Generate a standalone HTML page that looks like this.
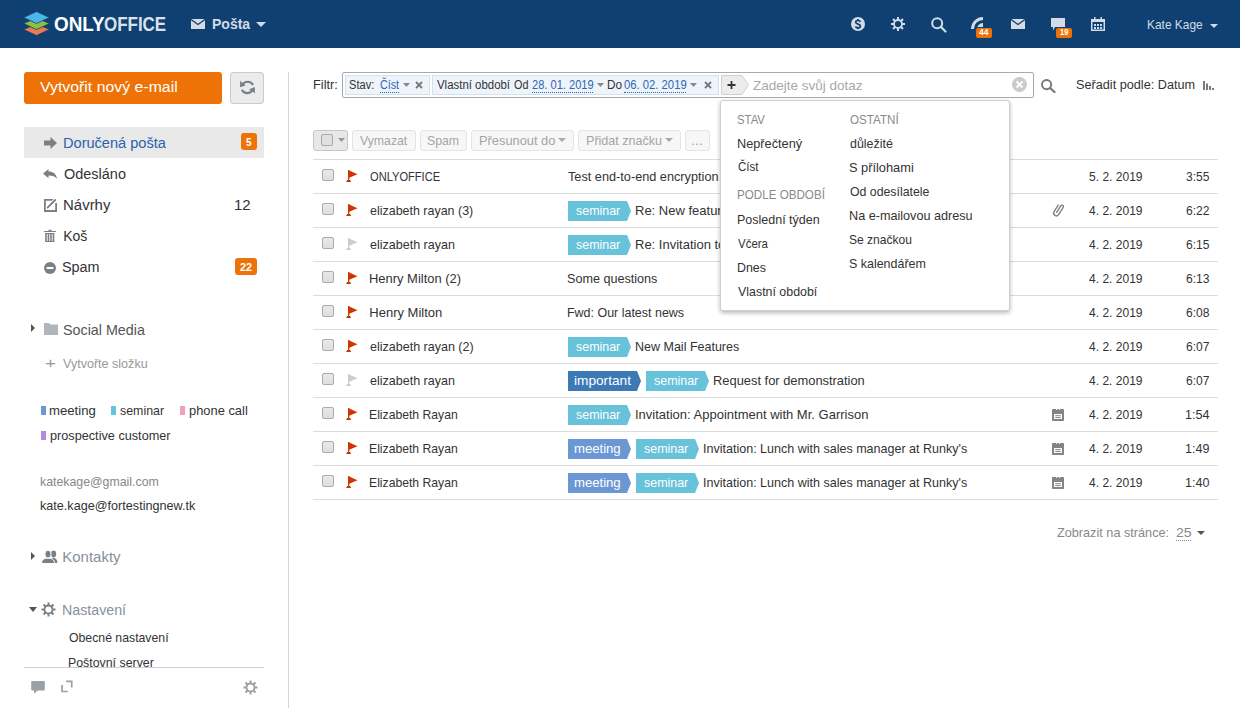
<!DOCTYPE html><html><head><meta charset="utf-8"><style>
html,body{margin:0;padding:0;width:1240px;height:708px;overflow:hidden;background:#fff;position:relative}
.t{position:absolute;white-space:nowrap;line-height:1;font-family:"Liberation Sans", sans-serif;transform-origin:0 0}
svg{display:block}
</style></head><body>
<div style="position:absolute;left:0px;top:0px;width:1240px;height:48px;background:#0f4071"></div>
<svg style="position:absolute;left:23px;top:11px" width="27" height="25" viewBox="0 0 27 25">
<path d="M13.5 13 L26.5 18.5 L13.5 24.5 L0.5 18.5 Z" fill="#ea7a53" stroke="#0f4071" stroke-width="0.8" stroke-linejoin="round"/>
<path d="M13.5 7 L26.5 12.5 L13.5 18.5 L0.5 12.5 Z" fill="#8cc13f" stroke="#0f4071" stroke-width="0.8" stroke-linejoin="round"/>
<path d="M13.5 0.5 L26.5 6.5 L13.5 12.5 L0.5 6.5 Z" fill="#4cb6ea" stroke="#0f4071" stroke-width="0.8" stroke-linejoin="round"/>
</svg>
<svg style="position:absolute;left:191px;top:19px" width="14" height="10" viewBox="0 0 14 10"><rect x="0" y="0" width="14" height="10" fill="#d2dbe6"/><path d="M0 0.5 L7 5.5 L14 0.5" stroke="#0f4071" stroke-width="1.4" fill="none"/></svg>
<svg style="position:absolute;left:256px;top:22px" width="10" height="5" viewBox="0 0 10 5"><path d="M0 0 L10 0 L5 5 Z" fill="#d2dbe6"/></svg>
<svg style="position:absolute;left:851px;top:17px" width="14" height="14" viewBox="0 0 14 14"><circle cx="7" cy="7" r="7" fill="#d2dbe6"/><path d="M9.5 4.9 C9.1 3.9 8.1 3.5 7 3.5 C5.6 3.5 4.7 4.2 4.7 5.3 C4.7 6.5 5.8 6.8 7 7.1 C8.3 7.4 9.4 7.8 9.4 9 C9.4 10.2 8.4 10.8 7 10.8 C5.8 10.8 4.9 10.3 4.5 9.4" stroke="#0f4071" stroke-width="1.7" fill="none"/><path d="M7 2 V3.6 M7 10.6 V12.2" stroke="#0f4071" stroke-width="1.6"/></svg>
<svg style="position:absolute;left:891px;top:17px" width="14" height="14" viewBox="0 0 14 14"><circle cx="7" cy="7" r="4.0" stroke="#d2dbe6" stroke-width="1.8" fill="none"/><g fill="#d2dbe6"><rect x="6.0" y="0" width="2.0" height="3.0" transform="rotate(0 7 7)"/><rect x="6.0" y="0" width="2.0" height="3.0" transform="rotate(45 7 7)"/><rect x="6.0" y="0" width="2.0" height="3.0" transform="rotate(90 7 7)"/><rect x="6.0" y="0" width="2.0" height="3.0" transform="rotate(135 7 7)"/><rect x="6.0" y="0" width="2.0" height="3.0" transform="rotate(180 7 7)"/><rect x="6.0" y="0" width="2.0" height="3.0" transform="rotate(225 7 7)"/><rect x="6.0" y="0" width="2.0" height="3.0" transform="rotate(270 7 7)"/><rect x="6.0" y="0" width="2.0" height="3.0" transform="rotate(315 7 7)"/></g></svg>
<svg style="position:absolute;left:931px;top:17px" width="16" height="16" viewBox="0 0 16 16"><circle cx="6.2" cy="6.2" r="5" stroke="#d2dbe6" stroke-width="2" fill="none"/><path d="M9.8 9.8 L14.5 14.5" stroke="#d2dbe6" stroke-width="2.2" stroke-linecap="round"/></svg>
<svg style="position:absolute;left:971px;top:17px" width="13" height="13" viewBox="0 0 13 13"><path d="M12 1.5 A10.5 10.5 0 0 0 1.5 12" stroke="#d2dbe6" stroke-width="2.8" fill="none"/><path d="M12 12 V6 A6 6 0 0 0 6 12 Z" fill="#d2dbe6"/></svg>
<div style="position:absolute;left:975px;top:27px;width:18px;height:12px;background:#ed7309;border:1px solid #0f4071;border-radius:3px;box-sizing:border-box"></div>
<svg style="position:absolute;left:1011px;top:19px" width="14" height="10" viewBox="0 0 14 10"><rect x="0" y="0" width="14" height="10" fill="#d2dbe6"/><path d="M0 0.5 L7 5.5 L14 0.5" stroke="#0f4071" stroke-width="1.4" fill="none"/></svg>
<svg style="position:absolute;left:1051px;top:18px" width="14" height="13" viewBox="0 0 14 13"><path d="M0 0 H14 V9 H4 L2 12.5 V9 H0 Z" fill="#d2dbe6"/></svg>
<div style="position:absolute;left:1055px;top:27px;width:18px;height:12px;background:#ed7309;border:1px solid #0f4071;border-radius:3px;box-sizing:border-box"></div>
<svg style="position:absolute;left:1091px;top:17px" width="14" height="14" viewBox="0 0 14 14"><rect x="0.75" y="2.75" width="12.5" height="10.5" stroke="#d2dbe6" stroke-width="1.5" fill="none"/>
<rect x="0" y="2" width="14" height="3" fill="#d2dbe6"/><rect x="3" y="0" width="1.5" height="3" fill="#d2dbe6"/><rect x="9.5" y="0" width="1.5" height="3" fill="#d2dbe6"/>
<g fill="#d2dbe6"><rect x="3" y="7" width="2" height="2"/><rect x="6" y="7" width="2" height="2"/><rect x="9" y="7" width="2" height="2"/>
<rect x="3" y="10" width="2" height="2"/><rect x="6" y="10" width="2" height="2"/><rect x="9" y="10" width="2" height="2"/></g></svg>
<svg style="position:absolute;left:1210px;top:24px" width="8" height="4" viewBox="0 0 8 4"><path d="M0 0 L8 0 L4 4 Z" fill="#d2dbe6"/></svg>
<div style="position:absolute;left:24px;top:72px;width:198px;height:32px;background:#ed7309;border-radius:3px"></div>
<div style="position:absolute;left:230px;top:72px;width:34px;height:32px;background:#ebebeb;border:1px solid #cacaca;border-radius:3px;box-sizing:border-box"></div>
<svg style="position:absolute;left:236px;top:76px" width="24" height="22" viewBox="0 0 24 22"><g fill="none" stroke="#7b8088" stroke-width="2.2">
<path d="M6.6 8.6 A6.1 6.1 0 0 1 17.1 8.9"/><path d="M16.4 14.2 A6.1 6.1 0 0 1 5.9 13.9"/></g>
<path d="M4.2 4.8 L4 11.2 L9.6 9.4 Z" fill="#7b8088"/><path d="M18.9 10.9 L18.9 17.2 L13.2 13.3 Z" fill="#7b8088"/></svg>
<div style="position:absolute;left:288px;top:72px;width:1px;height:636px;background:#d6d6d6"></div>
<div style="position:absolute;left:24px;top:127px;width:240px;height:31px;background:#e9e9e9"></div>
<svg style="position:absolute;left:44px;top:137px" width="13" height="12" viewBox="0 0 13 12"><path d="M0 3.5 H6.5 V0 L13 6 L6.5 12 V8.5 H0 Z" fill="#7b8088"/></svg>
<div style="position:absolute;left:241px;top:133px;width:16px;height:17px;background:#ed7309;border-radius:3px"></div>
<svg style="position:absolute;left:43px;top:169px" width="14" height="10" viewBox="0 0 14 10"><path d="M0 4.5 L5.5 0 V2.6 C10 2.6 13.5 5 14 10 C12 7.5 9.5 6.6 5.5 6.6 V9.2 Z" fill="#7b8088"/></svg>
<svg style="position:absolute;left:44px;top:198px" width="13" height="14" viewBox="0 0 13 14"><path d="M9 1.8 H0.9 V13 H12.1 V5" stroke="#7b8088" stroke-width="1.8" fill="none"/><path d="M3.6 9.6 L11.2 2" stroke="#fff" stroke-width="3.6" stroke-linecap="round"/><path d="M3.6 9.6 L11.2 2" stroke="#7b8088" stroke-width="1.8" stroke-linecap="round"/></svg>
<svg style="position:absolute;left:44px;top:229px" width="12" height="13" viewBox="0 0 12 13"><rect x="0" y="2" width="12" height="1" fill="#7b8088"/><rect x="4.5" y="0.8" width="3" height="1.4" fill="#7b8088"/><g fill="#7b8088"><rect x="1.2" y="4" width="1.6" height="9"/><rect x="3.7" y="4" width="1.6" height="9"/><rect x="6.2" y="4" width="1.6" height="9"/><rect x="8.7" y="4" width="1.6" height="9"/><rect x="1.2" y="4" width="9.1" height="1"/><rect x="1.2" y="12" width="9.1" height="1"/></g></svg>
<svg style="position:absolute;left:44px;top:262px" width="12" height="12" viewBox="0 0 12 12"><circle cx="6" cy="6" r="6" fill="#7b8088"/><rect x="2.6" y="5" width="6.8" height="2" fill="#fff"/></svg>
<div style="position:absolute;left:235px;top:258px;width:22px;height:17px;background:#ed7309;border-radius:3px"></div>
<svg style="position:absolute;left:31px;top:324px" width="4" height="8" viewBox="0 0 4 8"><path d="M0 0 L4 4 L0 8 Z" fill="#555"/></svg>
<svg style="position:absolute;left:44px;top:323px" width="14" height="12" viewBox="0 0 14 12"><path d="M0 0 H5 L6.5 1.5 H14 V12 H0 Z" fill="#b0b6bc"/></svg>
<div style="position:absolute;left:41px;top:406px;width:5px;height:9px;background:#6b98d3"></div>
<div style="position:absolute;left:111px;top:406px;width:5px;height:9px;background:#68c2d9"></div>
<div style="position:absolute;left:180px;top:406px;width:5px;height:9px;background:#f0a0b8"></div>
<div style="position:absolute;left:41px;top:431px;width:5px;height:9px;background:#b88bd8"></div>
<svg style="position:absolute;left:31px;top:552px" width="4" height="8" viewBox="0 0 4 8"><path d="M0 0 L4 4 L0 8 Z" fill="#555"/></svg>
<svg style="position:absolute;left:41px;top:550px" width="17" height="13" viewBox="0 0 17 13"><g fill="#7b8088"><ellipse cx="12.6" cy="4" rx="2.6" ry="3.4"/><path d="M9 13 C9 9.6 10.4 8 12.6 8 C14.8 8 16.4 9.6 16.4 13 Z"/><g stroke="#fff" stroke-width="1"><ellipse cx="7" cy="4.2" rx="3.1" ry="3.9"/><path d="M0.5 13.5 C0.5 9.5 3.2 8.2 7 8.2 C10.8 8.2 13.5 9.5 13.5 13.5 Z"/></g></g></svg>
<svg style="position:absolute;left:29px;top:607px" width="8" height="5" viewBox="0 0 8 5"><path d="M0 0 L8 0 L4 5 Z" fill="#555"/></svg>
<svg style="position:absolute;left:41px;top:602px" width="15" height="15" viewBox="0 0 15 15"><circle cx="7.5" cy="7.5" r="4.0" stroke="#7b8088" stroke-width="1.8" fill="none"/><g fill="#7b8088"><rect x="6.5" y="0.5" width="2.0" height="3.0" transform="rotate(0 7.5 7.5)"/><rect x="6.5" y="0.5" width="2.0" height="3.0" transform="rotate(45 7.5 7.5)"/><rect x="6.5" y="0.5" width="2.0" height="3.0" transform="rotate(90 7.5 7.5)"/><rect x="6.5" y="0.5" width="2.0" height="3.0" transform="rotate(135 7.5 7.5)"/><rect x="6.5" y="0.5" width="2.0" height="3.0" transform="rotate(180 7.5 7.5)"/><rect x="6.5" y="0.5" width="2.0" height="3.0" transform="rotate(225 7.5 7.5)"/><rect x="6.5" y="0.5" width="2.0" height="3.0" transform="rotate(270 7.5 7.5)"/><rect x="6.5" y="0.5" width="2.0" height="3.0" transform="rotate(315 7.5 7.5)"/></g></svg>
<div style="position:absolute;left:0px;top:667px;width:288px;height:41px;background:#fff"></div>
<div style="position:absolute;left:24px;top:667px;width:240px;height:1px;background:#cfcfcf"></div>
<svg style="position:absolute;left:31px;top:681px" width="14" height="13" viewBox="0 0 14 13"><rect x="0.2" y="0" width="13.6" height="9.6" rx="1" fill="#9aa0a6"/><path d="M3 9 L3.2 12.8 L7 9 Z" fill="#9aa0a6"/></svg>
<svg style="position:absolute;left:60px;top:679px" width="14" height="15" viewBox="0 0 14 15"><path d="M6.2 2.3 H11.7 V8.5 M2.1 6 V12.5 H7.8" stroke="#9aa0a6" stroke-width="1.7" fill="none"/></svg>
<svg style="position:absolute;left:243px;top:680px" width="15" height="15" viewBox="0 0 15 15"><circle cx="7.5" cy="7.5" r="4.0" stroke="#9aa0a6" stroke-width="1.8" fill="none"/><g fill="#9aa0a6"><rect x="6.5" y="0.5" width="2.0" height="3.0" transform="rotate(0 7.5 7.5)"/><rect x="6.5" y="0.5" width="2.0" height="3.0" transform="rotate(45 7.5 7.5)"/><rect x="6.5" y="0.5" width="2.0" height="3.0" transform="rotate(90 7.5 7.5)"/><rect x="6.5" y="0.5" width="2.0" height="3.0" transform="rotate(135 7.5 7.5)"/><rect x="6.5" y="0.5" width="2.0" height="3.0" transform="rotate(180 7.5 7.5)"/><rect x="6.5" y="0.5" width="2.0" height="3.0" transform="rotate(225 7.5 7.5)"/><rect x="6.5" y="0.5" width="2.0" height="3.0" transform="rotate(270 7.5 7.5)"/><rect x="6.5" y="0.5" width="2.0" height="3.0" transform="rotate(315 7.5 7.5)"/></g></svg>
<div style="position:absolute;left:342px;top:72px;width:692px;height:26px;border:1px solid #a9a9a9;border-radius:2px;box-sizing:border-box;background:#fff"></div>
<div style="position:absolute;left:345px;top:75px;width:85px;height:20px;background:#edf4fb;border:1px solid #d3e1ee;box-sizing:border-box"></div>
<div style="position:absolute;left:380px;top:91px;width:19px;height:1px;border-bottom:1px dotted #2f66b0"></div>
<svg style="position:absolute;left:403px;top:83px" width="7" height="4" viewBox="0 0 7 4"><path d="M0 0 L7 0 L3.5 4 Z" fill="#888"/></svg>
<svg style="position:absolute;left:415px;top:81px" width="8" height="8" viewBox="0 0 8 8"><path d="M1 1 L7 7 M7 1 L1 7" stroke="#777" stroke-width="1.8"/></svg>
<div style="position:absolute;left:432px;top:75px;width:287px;height:20px;background:#edf4fb;border:1px solid #d3e1ee;box-sizing:border-box"></div>
<div style="position:absolute;left:532px;top:91px;width:61px;height:1px;border-bottom:1px dotted #2f66b0"></div>
<svg style="position:absolute;left:597px;top:83px" width="7" height="4" viewBox="0 0 7 4"><path d="M0 0 L7 0 L3.5 4 Z" fill="#888"/></svg>
<div style="position:absolute;left:624px;top:91px;width:62px;height:1px;border-bottom:1px dotted #2f66b0"></div>
<svg style="position:absolute;left:690px;top:83px" width="7" height="4" viewBox="0 0 7 4"><path d="M0 0 L7 0 L3.5 4 Z" fill="#888"/></svg>
<svg style="position:absolute;left:704px;top:81px" width="8" height="8" viewBox="0 0 8 8"><path d="M1 1 L7 7 M7 1 L1 7" stroke="#777" stroke-width="1.8"/></svg>
<svg style="position:absolute;left:721px;top:75px" width="28" height="20" viewBox="0 0 28 20"><path d="M0.5 0.5 H21 L27.5 10 L21 19.5 H0.5 Z" fill="#ececec" stroke="#cfcfcf" stroke-width="1"/><path d="M6.5 10 H14.5 M10.5 6 V14" stroke="#333" stroke-width="1.8"/></svg>
<svg style="position:absolute;left:1012px;top:77px" width="15" height="15" viewBox="0 0 15 15"><circle cx="7.5" cy="7.5" r="7.5" fill="#cbcbcb"/><path d="M4.5 4.5 L10.5 10.5 M10.5 4.5 L4.5 10.5" stroke="#fff" stroke-width="1.8"/></svg>
<svg style="position:absolute;left:1041px;top:79px" width="15" height="14" viewBox="0 0 15 14"><circle cx="5.6" cy="5.6" r="4.6" stroke="#777" stroke-width="1.9" fill="none"/><path d="M9 9 L13.5 13" stroke="#777" stroke-width="2.2" stroke-linecap="round"/></svg>
<svg style="position:absolute;left:1203px;top:81px" width="11" height="9" viewBox="0 0 11 9"><g fill="#7d7d7d"><rect x="0" y="0" width="2" height="9"/><rect x="3" y="2.5" width="2" height="6.5"/><rect x="6" y="5" width="2" height="4"/><rect x="9" y="7" width="2" height="2"/></g></svg>
<div style="position:absolute;left:313px;top:130px;width:35px;height:21px;background:#e8e8e8;border:1px solid #c6c6c6;border-radius:3px;box-sizing:border-box"></div>
<div style="position:absolute;left:321px;top:134px;width:12px;height:12px;background:#e0e0e0;border:1px solid #a9a9a9;border-radius:2px;box-sizing:border-box"></div>
<svg style="position:absolute;left:338px;top:138px" width="7" height="4" viewBox="0 0 7 4"><path d="M0 0 L7 0 L3.5 4 Z" fill="#999"/></svg>
<div style="position:absolute;left:352px;top:130px;width:64px;height:21px;background:#f7f7f7;border:1px solid #e4e4e4;border-radius:3px;box-sizing:border-box"></div>
<div style="position:absolute;left:420px;top:130px;width:47px;height:21px;background:#f7f7f7;border:1px solid #e4e4e4;border-radius:3px;box-sizing:border-box"></div>
<div style="position:absolute;left:471px;top:130px;width:103px;height:21px;background:#f7f7f7;border:1px solid #e4e4e4;border-radius:3px;box-sizing:border-box"></div>
<div style="position:absolute;left:578px;top:130px;width:103px;height:21px;background:#f7f7f7;border:1px solid #e4e4e4;border-radius:3px;box-sizing:border-box"></div>
<div style="position:absolute;left:685px;top:130px;width:25px;height:21px;background:#f7f7f7;border:1px solid #e4e4e4;border-radius:3px;box-sizing:border-box"></div>
<svg style="position:absolute;left:558px;top:138px" width="8" height="4" viewBox="0 0 8 4"><path d="M0 0 L8 0 L4 4 Z" fill="#aaa"/></svg>
<svg style="position:absolute;left:665px;top:138px" width="8" height="4" viewBox="0 0 8 4"><path d="M0 0 L8 0 L4 4 Z" fill="#aaa"/></svg>
<div style="position:absolute;left:313px;top:159px;width:905px;height:1px;background:#dcdcdc"></div>
<div style="position:absolute;left:313px;top:193px;width:905px;height:1px;background:#dcdcdc"></div>
<div style="position:absolute;left:313px;top:227px;width:905px;height:1px;background:#dcdcdc"></div>
<div style="position:absolute;left:313px;top:261px;width:905px;height:1px;background:#dcdcdc"></div>
<div style="position:absolute;left:313px;top:295px;width:905px;height:1px;background:#dcdcdc"></div>
<div style="position:absolute;left:313px;top:329px;width:905px;height:1px;background:#dcdcdc"></div>
<div style="position:absolute;left:313px;top:363px;width:905px;height:1px;background:#dcdcdc"></div>
<div style="position:absolute;left:313px;top:397px;width:905px;height:1px;background:#dcdcdc"></div>
<div style="position:absolute;left:313px;top:431px;width:905px;height:1px;background:#dcdcdc"></div>
<div style="position:absolute;left:313px;top:465px;width:905px;height:1px;background:#dcdcdc"></div>
<div style="position:absolute;left:313px;top:499px;width:905px;height:1px;background:#dcdcdc"></div>
<div style="position:absolute;left:322px;top:169px;width:12px;height:12px;background:linear-gradient(#e9e9e9,#dedede);border:1px solid #aaaaaa;border-radius:2px;box-sizing:border-box"></div>
<svg style="position:absolute;left:346px;top:170px" width="12" height="12" viewBox="0 0 12 12"><path d="M2 0 L11.5 4.2 L2 8.3 Z" fill="#d23400"/><rect x="2" y="0" width="1.3" height="11" fill="#d23400"/><path d="M0 12 L1.2 10 H4.2 L5.2 12 Z" fill="#d23400"/></svg>
<div style="position:absolute;left:322px;top:203px;width:12px;height:12px;background:linear-gradient(#e9e9e9,#dedede);border:1px solid #aaaaaa;border-radius:2px;box-sizing:border-box"></div>
<svg style="position:absolute;left:346px;top:204px" width="12" height="12" viewBox="0 0 12 12"><path d="M2 0 L11.5 4.2 L2 8.3 Z" fill="#d23400"/><rect x="2" y="0" width="1.3" height="11" fill="#d23400"/><path d="M0 12 L1.2 10 H4.2 L5.2 12 Z" fill="#d23400"/></svg>
<svg style="position:absolute;left:568px;top:201px" width="63" height="20" viewBox="0 0 63 20"><path d="M0 0 H59 L63 10 L59 20 H0 Z" fill="#68c2d9"/></svg>
<svg style="position:absolute;left:1044px;top:198px" width="28" height="24" viewBox="0 0 28 24"><path d="M0 2.5 V10.2 A2.75 2.75 0 0 0 5.5 10.2 V1.8 A1.45 1.45 0 0 0 2.6 1.8 V9.5" stroke="#7d8287" stroke-width="1.4" fill="none" stroke-linecap="round" transform="translate(14.3 12) rotate(32) translate(-2.75 -6.65)"/></svg>
<div style="position:absolute;left:322px;top:237px;width:12px;height:12px;background:linear-gradient(#e9e9e9,#dedede);border:1px solid #aaaaaa;border-radius:2px;box-sizing:border-box"></div>
<svg style="position:absolute;left:346px;top:238px" width="12" height="12" viewBox="0 0 12 12"><path d="M2 0 L11.5 4.2 L2 8.3 Z" fill="#cccccc"/><rect x="2" y="0" width="1.3" height="11" fill="#cccccc"/><path d="M0 12 L1.2 10 H4.2 L5.2 12 Z" fill="#cccccc"/></svg>
<svg style="position:absolute;left:568px;top:235px" width="63" height="20" viewBox="0 0 63 20"><path d="M0 0 H59 L63 10 L59 20 H0 Z" fill="#68c2d9"/></svg>
<div style="position:absolute;left:322px;top:271px;width:12px;height:12px;background:linear-gradient(#e9e9e9,#dedede);border:1px solid #aaaaaa;border-radius:2px;box-sizing:border-box"></div>
<svg style="position:absolute;left:346px;top:272px" width="12" height="12" viewBox="0 0 12 12"><path d="M2 0 L11.5 4.2 L2 8.3 Z" fill="#d23400"/><rect x="2" y="0" width="1.3" height="11" fill="#d23400"/><path d="M0 12 L1.2 10 H4.2 L5.2 12 Z" fill="#d23400"/></svg>
<div style="position:absolute;left:322px;top:305px;width:12px;height:12px;background:linear-gradient(#e9e9e9,#dedede);border:1px solid #aaaaaa;border-radius:2px;box-sizing:border-box"></div>
<svg style="position:absolute;left:346px;top:306px" width="12" height="12" viewBox="0 0 12 12"><path d="M2 0 L11.5 4.2 L2 8.3 Z" fill="#d23400"/><rect x="2" y="0" width="1.3" height="11" fill="#d23400"/><path d="M0 12 L1.2 10 H4.2 L5.2 12 Z" fill="#d23400"/></svg>
<div style="position:absolute;left:322px;top:339px;width:12px;height:12px;background:linear-gradient(#e9e9e9,#dedede);border:1px solid #aaaaaa;border-radius:2px;box-sizing:border-box"></div>
<svg style="position:absolute;left:346px;top:340px" width="12" height="12" viewBox="0 0 12 12"><path d="M2 0 L11.5 4.2 L2 8.3 Z" fill="#d23400"/><rect x="2" y="0" width="1.3" height="11" fill="#d23400"/><path d="M0 12 L1.2 10 H4.2 L5.2 12 Z" fill="#d23400"/></svg>
<svg style="position:absolute;left:568px;top:337px" width="63" height="20" viewBox="0 0 63 20"><path d="M0 0 H59 L63 10 L59 20 H0 Z" fill="#68c2d9"/></svg>
<div style="position:absolute;left:322px;top:373px;width:12px;height:12px;background:linear-gradient(#e9e9e9,#dedede);border:1px solid #aaaaaa;border-radius:2px;box-sizing:border-box"></div>
<svg style="position:absolute;left:346px;top:374px" width="12" height="12" viewBox="0 0 12 12"><path d="M2 0 L11.5 4.2 L2 8.3 Z" fill="#cccccc"/><rect x="2" y="0" width="1.3" height="11" fill="#cccccc"/><path d="M0 12 L1.2 10 H4.2 L5.2 12 Z" fill="#cccccc"/></svg>
<svg style="position:absolute;left:568px;top:371px" width="73" height="20" viewBox="0 0 73 20"><path d="M0 0 H69 L73 10 L69 20 H0 Z" fill="#3d7ab5"/></svg>
<svg style="position:absolute;left:646px;top:371px" width="63" height="20" viewBox="0 0 63 20"><path d="M0 0 H59 L63 10 L59 20 H0 Z" fill="#68c2d9"/></svg>
<div style="position:absolute;left:322px;top:407px;width:12px;height:12px;background:linear-gradient(#e9e9e9,#dedede);border:1px solid #aaaaaa;border-radius:2px;box-sizing:border-box"></div>
<svg style="position:absolute;left:346px;top:408px" width="12" height="12" viewBox="0 0 12 12"><path d="M2 0 L11.5 4.2 L2 8.3 Z" fill="#d23400"/><rect x="2" y="0" width="1.3" height="11" fill="#d23400"/><path d="M0 12 L1.2 10 H4.2 L5.2 12 Z" fill="#d23400"/></svg>
<svg style="position:absolute;left:568px;top:405px" width="63" height="20" viewBox="0 0 63 20"><path d="M0 0 H59 L63 10 L59 20 H0 Z" fill="#68c2d9"/></svg>
<svg style="position:absolute;left:1052px;top:409px" width="12" height="12" viewBox="0 0 12 12"><rect x="0" y="0" width="12" height="12" rx="0.8" fill="#80858b"/><rect x="4.2" y="0" width="1" height="1" fill="#fff"/><rect x="7" y="0" width="1" height="1" fill="#fff"/><rect x="2" y="5" width="8" height="5" fill="#fff"/><rect x="3.2" y="6.2" width="5.6" height="1" fill="#80858b"/><rect x="3.2" y="8.1" width="5.6" height="1" fill="#80858b"/></svg>
<div style="position:absolute;left:322px;top:441px;width:12px;height:12px;background:linear-gradient(#e9e9e9,#dedede);border:1px solid #aaaaaa;border-radius:2px;box-sizing:border-box"></div>
<svg style="position:absolute;left:346px;top:442px" width="12" height="12" viewBox="0 0 12 12"><path d="M2 0 L11.5 4.2 L2 8.3 Z" fill="#d23400"/><rect x="2" y="0" width="1.3" height="11" fill="#d23400"/><path d="M0 12 L1.2 10 H4.2 L5.2 12 Z" fill="#d23400"/></svg>
<svg style="position:absolute;left:568px;top:439px" width="63" height="20" viewBox="0 0 63 20"><path d="M0 0 H59 L63 10 L59 20 H0 Z" fill="#6b98d3"/></svg>
<svg style="position:absolute;left:636px;top:439px" width="63" height="20" viewBox="0 0 63 20"><path d="M0 0 H59 L63 10 L59 20 H0 Z" fill="#68c2d9"/></svg>
<svg style="position:absolute;left:1052px;top:443px" width="12" height="12" viewBox="0 0 12 12"><rect x="0" y="0" width="12" height="12" rx="0.8" fill="#80858b"/><rect x="4.2" y="0" width="1" height="1" fill="#fff"/><rect x="7" y="0" width="1" height="1" fill="#fff"/><rect x="2" y="5" width="8" height="5" fill="#fff"/><rect x="3.2" y="6.2" width="5.6" height="1" fill="#80858b"/><rect x="3.2" y="8.1" width="5.6" height="1" fill="#80858b"/></svg>
<div style="position:absolute;left:322px;top:475px;width:12px;height:12px;background:linear-gradient(#e9e9e9,#dedede);border:1px solid #aaaaaa;border-radius:2px;box-sizing:border-box"></div>
<svg style="position:absolute;left:346px;top:476px" width="12" height="12" viewBox="0 0 12 12"><path d="M2 0 L11.5 4.2 L2 8.3 Z" fill="#d23400"/><rect x="2" y="0" width="1.3" height="11" fill="#d23400"/><path d="M0 12 L1.2 10 H4.2 L5.2 12 Z" fill="#d23400"/></svg>
<svg style="position:absolute;left:568px;top:473px" width="63" height="20" viewBox="0 0 63 20"><path d="M0 0 H59 L63 10 L59 20 H0 Z" fill="#6b98d3"/></svg>
<svg style="position:absolute;left:636px;top:473px" width="63" height="20" viewBox="0 0 63 20"><path d="M0 0 H59 L63 10 L59 20 H0 Z" fill="#68c2d9"/></svg>
<svg style="position:absolute;left:1052px;top:477px" width="12" height="12" viewBox="0 0 12 12"><rect x="0" y="0" width="12" height="12" rx="0.8" fill="#80858b"/><rect x="4.2" y="0" width="1" height="1" fill="#fff"/><rect x="7" y="0" width="1" height="1" fill="#fff"/><rect x="2" y="5" width="8" height="5" fill="#fff"/><rect x="3.2" y="6.2" width="5.6" height="1" fill="#80858b"/><rect x="3.2" y="8.1" width="5.6" height="1" fill="#80858b"/></svg>
<div style="position:absolute;left:1176px;top:539px;width:15px;height:1px;border-bottom:1px dotted #888"></div>
<svg style="position:absolute;left:1197px;top:531px" width="8" height="4" viewBox="0 0 8 4"><path d="M0 0 L8 0 L4 4 Z" fill="#555"/></svg>
<div class="t" style="left:54.06px;top:14.0px;font-size:20px;color:#ffffff;font-weight:700;transform:scaleX(0.9434);">ONLY</div>
<div class="t" style="left:104.15px;top:14.0px;font-size:20px;color:#dae3eb;font-weight:700;transform:scaleX(0.8472);">OFFICE</div>
<div class="t" style="left:212.00px;top:17.0px;font-size:14px;color:#d2dbe6;font-weight:700;">Pošta</div>
<div class="t" style="left:979.20px;top:28.0px;font-size:9px;color:#fff;font-weight:700;transform:scaleX(0.9500);">44</div>
<div class="t" style="left:1060.00px;top:28.0px;font-size:9px;color:#fff;font-weight:700;transform:scaleX(0.8400);">19</div>
<div class="t" style="left:1147.08px;top:18.0px;font-size:13px;color:#d2dbe6;transform:scaleX(0.9167);">Kate Kage</div>
<div class="t" style="left:40.00px;top:80.0px;font-size:14px;color:#fff;transform:scaleX(1.1322);">Vytvořit nový e-mail</div>
<div class="t" style="left:62.96px;top:136.0px;font-size:14px;color:#2a62ad;transform:scaleX(1.0408);">Doručená pošta</div>
<div class="t" style="left:246.00px;top:138.0px;font-size:10px;color:#fff;font-weight:700;">5</div>
<div class="t" style="left:63.50px;top:167.0px;font-size:14px;color:#333;transform:scaleX(1.0333);">Odesláno</div>
<div class="t" style="left:63.13px;top:198.0px;font-size:14px;color:#333;transform:scaleX(1.0698);">Návrhy</div>
<div class="t" style="left:234.43px;top:198.0px;font-size:14px;color:#333;transform:scaleX(1.0714);">12</div>
<div class="t" style="left:63.20px;top:229.0px;font-size:14px;color:#333;">Koš</div>
<div class="t" style="left:62.47px;top:260.0px;font-size:14px;color:#333;transform:scaleX(1.0286);">Spam</div>
<div class="t" style="left:240.00px;top:263.0px;font-size:10px;color:#fff;font-weight:700;transform:scaleX(1.0909);">22</div>
<div class="t" style="left:63.05px;top:322.0px;font-size:15px;color:#555;transform:scaleX(0.9529);">Social Media</div>
<div class="t" style="left:45.00px;top:355.0px;font-size:15px;color:#999;transform:scaleX(1.2500);">+</div>
<div class="t" style="left:63.00px;top:357.0px;font-size:13px;color:#999;transform:scaleX(0.9655);">Vytvořte složku</div>
<div class="t" style="left:49.49px;top:404.0px;font-size:13px;color:#333;transform:scaleX(1.0111);">meeting</div>
<div class="t" style="left:120.20px;top:404.0px;font-size:13px;color:#333;transform:scaleX(0.9532);">seminar</div>
<div class="t" style="left:188.51px;top:404.0px;font-size:13px;color:#333;transform:scaleX(0.9914);">phone call</div>
<div class="t" style="left:49.52px;top:428.6px;font-size:13px;color:#333;transform:scaleX(0.9756);">prospective customer</div>
<div class="t" style="left:39.65px;top:475.0px;font-size:13px;color:#888;transform:scaleX(0.9492);">katekage@gmail.com</div>
<div class="t" style="left:39.63px;top:499.0px;font-size:13px;color:#333;transform:scaleX(0.9711);">kate.kage@fortestingnew.tk</div>
<div class="t" style="left:62.20px;top:549.2px;font-size:15px;color:#88919b;">Kontakty</div>
<div class="t" style="left:62.25px;top:601.7px;font-size:15px;color:#88919b;transform:scaleX(0.9478);">Nastavení</div>
<div class="t" style="left:69.00px;top:631.0px;font-size:13px;color:#333;transform:scaleX(0.9434);">Obecné nastavení</div>
<div class="t" style="left:68.05px;top:656.0px;font-size:13px;color:#333;transform:scaleX(0.9500);">Poštovní server</div>
<div class="t" style="left:312.74px;top:79.0px;font-size:12px;color:#333;transform:scaleX(1.0636);">Filtr:</div>
<div class="t" style="left:348.68px;top:79.0px;font-size:12px;color:#333;transform:scaleX(0.9231);">Stav:</div>
<div class="t" style="left:379.70px;top:79.0px;font-size:12px;color:#2f66b0;transform:scaleX(0.8909);">Číst</div>
<div class="t" style="left:436.90px;top:79.0px;font-size:12px;color:#333;transform:scaleX(0.9519);">Vlastní období</div>
<div class="t" style="left:514.40px;top:79.0px;font-size:12px;color:#333;transform:scaleX(0.9000);">Od</div>
<div class="t" style="left:532.20px;top:79.0px;font-size:12px;color:#2f66b0;transform:scaleX(0.9242);">28. 01. 2019</div>
<div class="t" style="left:606.82px;top:79.0px;font-size:12px;color:#333;transform:scaleX(0.9786);">Do</div>
<div class="t" style="left:624.00px;top:79.0px;font-size:12px;color:#2f66b0;transform:scaleX(0.9394);">06. 02. 2019</div>
<div class="t" style="left:753.20px;top:78.5px;font-size:13px;color:#a8a8a8;transform:scaleX(1.0381);">Zadejte svůj dotaz</div>
<div class="t" style="left:1075.64px;top:79.0px;font-size:12px;color:#333;transform:scaleX(1.0568);">Seřadit podle: Datum</div>
<div class="t" style="left:360.20px;top:134.0px;font-size:13px;color:#a5a5a5;transform:scaleX(0.9440);">Vymazat</div>
<div class="t" style="left:426.75px;top:134.0px;font-size:13px;color:#a5a5a5;transform:scaleX(0.9455);">Spam</div>
<div class="t" style="left:478.71px;top:134.0px;font-size:13px;color:#a5a5a5;transform:scaleX(0.9868);">Přesunout do</div>
<div class="t" style="left:585.63px;top:134.0px;font-size:13px;color:#a5a5a5;transform:scaleX(0.9662);">Přidat značku</div>
<div class="t" style="left:690.89px;top:134.0px;font-size:13px;color:#a5a5a5;transform:scaleX(1.1111);">...</div>
<div class="t" style="left:370.30px;top:170.0px;font-size:13px;color:#333;transform:scaleX(0.8537);">ONLYOFFICE</div>
<div class="t" style="left:568.00px;top:170.0px;font-size:13px;color:#333;transform:scaleX(0.9779);">Test end-to-end encryption</div>
<div class="t" style="left:1089.30px;top:170.0px;font-size:13px;color:#333;transform:scaleX(0.9259);">5. 2. 2019</div>
<div class="t" style="left:1185.80px;top:170.0px;font-size:13px;color:#333;transform:scaleX(0.9280);">3:55</div>
<div class="t" style="left:370.20px;top:204.0px;font-size:13px;color:#333;transform:scaleX(0.9589);">elizabeth rayan (3)</div>
<div class="t" style="left:575.50px;top:204.0px;font-size:13px;color:#fff;transform:scaleX(0.9574);">seminar</div>
<div class="t" style="left:635.00px;top:204.0px;font-size:13px;color:#333;">Re: New features in ONLYOFFICE</div>
<div class="t" style="left:1089.30px;top:204.0px;font-size:13px;color:#333;transform:scaleX(0.9259);">4. 2. 2019</div>
<div class="t" style="left:1185.80px;top:204.0px;font-size:13px;color:#333;transform:scaleX(0.9280);">6:22</div>
<div class="t" style="left:370.20px;top:238.0px;font-size:13px;color:#333;transform:scaleX(0.9625);">elizabeth rayan</div>
<div class="t" style="left:575.50px;top:238.0px;font-size:13px;color:#fff;transform:scaleX(0.9574);">seminar</div>
<div class="t" style="left:635.00px;top:238.0px;font-size:13px;color:#333;">Re: Invitation to the event</div>
<div class="t" style="left:1089.30px;top:238.0px;font-size:13px;color:#333;transform:scaleX(0.9259);">4. 2. 2019</div>
<div class="t" style="left:1185.80px;top:238.0px;font-size:13px;color:#333;transform:scaleX(0.9280);">6:15</div>
<div class="t" style="left:369.30px;top:272.0px;font-size:13px;color:#333;transform:scaleX(0.9956);">Henry Milton (2)</div>
<div class="t" style="left:567.03px;top:272.0px;font-size:13px;color:#333;transform:scaleX(0.9696);">Some questions</div>
<div class="t" style="left:1089.30px;top:272.0px;font-size:13px;color:#333;transform:scaleX(0.9259);">4. 2. 2019</div>
<div class="t" style="left:1185.80px;top:272.0px;font-size:13px;color:#333;transform:scaleX(0.9280);">6:13</div>
<div class="t" style="left:369.30px;top:306.0px;font-size:13px;color:#333;">Henry Milton</div>
<div class="t" style="left:567.04px;top:306.0px;font-size:13px;color:#333;transform:scaleX(0.9587);">Fwd: Our latest news</div>
<div class="t" style="left:1089.30px;top:306.0px;font-size:13px;color:#333;transform:scaleX(0.9259);">4. 2. 2019</div>
<div class="t" style="left:1185.80px;top:306.0px;font-size:13px;color:#333;transform:scaleX(0.9280);">6:08</div>
<div class="t" style="left:370.20px;top:340.0px;font-size:13px;color:#333;transform:scaleX(0.9626);">elizabeth rayan (2)</div>
<div class="t" style="left:575.50px;top:340.0px;font-size:13px;color:#fff;transform:scaleX(0.9574);">seminar</div>
<div class="t" style="left:635.04px;top:340.0px;font-size:13px;color:#333;transform:scaleX(0.9617);">New Mail Features</div>
<div class="t" style="left:1089.30px;top:340.0px;font-size:13px;color:#333;transform:scaleX(0.9259);">4. 2. 2019</div>
<div class="t" style="left:1185.80px;top:340.0px;font-size:13px;color:#333;transform:scaleX(0.9280);">6:07</div>
<div class="t" style="left:370.20px;top:374.0px;font-size:13px;color:#333;transform:scaleX(0.9625);">elizabeth rayan</div>
<div class="t" style="left:574.45px;top:374.0px;font-size:13px;color:#fff;transform:scaleX(1.0509);">important</div>
<div class="t" style="left:653.50px;top:374.0px;font-size:13px;color:#fff;transform:scaleX(0.9574);">seminar</div>
<div class="t" style="left:713.01px;top:374.0px;font-size:13px;color:#333;transform:scaleX(0.9908);">Request for demonstration</div>
<div class="t" style="left:1089.30px;top:374.0px;font-size:13px;color:#333;transform:scaleX(0.9259);">4. 2. 2019</div>
<div class="t" style="left:1185.80px;top:374.0px;font-size:13px;color:#333;transform:scaleX(0.9280);">6:07</div>
<div class="t" style="left:369.36px;top:408.0px;font-size:13px;color:#333;transform:scaleX(0.9376);">Elizabeth Rayan</div>
<div class="t" style="left:575.50px;top:408.0px;font-size:13px;color:#fff;transform:scaleX(0.9574);">seminar</div>
<div class="t" style="left:635.00px;top:408.0px;font-size:13px;color:#333;">Invitation: Appointment with Mr. Garrison</div>
<div class="t" style="left:1089.30px;top:408.0px;font-size:13px;color:#333;transform:scaleX(0.9259);">4. 2. 2019</div>
<div class="t" style="left:1184.83px;top:408.0px;font-size:13px;color:#333;transform:scaleX(0.9667);">1:54</div>
<div class="t" style="left:369.36px;top:442.0px;font-size:13px;color:#333;transform:scaleX(0.9376);">Elizabeth Rayan</div>
<div class="t" style="left:574.49px;top:442.0px;font-size:13px;color:#fff;transform:scaleX(1.0089);">meeting</div>
<div class="t" style="left:643.50px;top:442.0px;font-size:13px;color:#fff;transform:scaleX(0.9574);">seminar</div>
<div class="t" style="left:703.04px;top:442.0px;font-size:13px;color:#333;transform:scaleX(0.9634);">Invitation: Lunch with sales manager at Runky&#x27;s</div>
<div class="t" style="left:1089.30px;top:442.0px;font-size:13px;color:#333;transform:scaleX(0.9259);">4. 2. 2019</div>
<div class="t" style="left:1184.83px;top:442.0px;font-size:13px;color:#333;transform:scaleX(0.9667);">1:49</div>
<div class="t" style="left:369.36px;top:476.0px;font-size:13px;color:#333;transform:scaleX(0.9376);">Elizabeth Rayan</div>
<div class="t" style="left:574.49px;top:476.0px;font-size:13px;color:#fff;transform:scaleX(1.0089);">meeting</div>
<div class="t" style="left:643.50px;top:476.0px;font-size:13px;color:#fff;transform:scaleX(0.9574);">seminar</div>
<div class="t" style="left:703.04px;top:476.0px;font-size:13px;color:#333;transform:scaleX(0.9634);">Invitation: Lunch with sales manager at Runky&#x27;s</div>
<div class="t" style="left:1089.30px;top:476.0px;font-size:13px;color:#333;transform:scaleX(0.9259);">4. 2. 2019</div>
<div class="t" style="left:1184.83px;top:476.0px;font-size:13px;color:#333;transform:scaleX(0.9667);">1:40</div>
<div class="t" style="left:1057.00px;top:526.0px;font-size:13px;color:#888;transform:scaleX(0.9754);">Zobrazit na stránce:</div>
<div class="t" style="left:1175.60px;top:526.0px;font-size:13px;color:#888;transform:scaleX(1.0857);">25</div>
<div style="position:absolute;left:720px;top:100px;width:290px;height:211px;background:#fff;border:1px solid #cfcfcf;border-radius:3px;box-sizing:border-box;box-shadow:0 2px 4px rgba(0,0,0,0.28)"></div>
<div class="t" style="left:737.26px;top:113.6px;font-size:12px;color:#8a8a8a;transform:scaleX(0.9448);">STAV</div>
<div class="t" style="left:850.20px;top:113.6px;font-size:12px;color:#8a8a8a;transform:scaleX(0.9680);">OSTATNÍ</div>
<div class="t" style="left:737.22px;top:136.7px;font-size:13px;color:#333;transform:scaleX(0.9788);">Nepřečtený</div>
<div class="t" style="left:738.20px;top:160.4px;font-size:13px;color:#333;transform:scaleX(0.8870);">Číst</div>
<div class="t" style="left:737.23px;top:189.3px;font-size:12px;color:#8a8a8a;transform:scaleX(0.9689);">PODLE OBDOBÍ</div>
<div class="t" style="left:737.24px;top:213.2px;font-size:13px;color:#333;transform:scaleX(0.9612);">Poslední týden</div>
<div class="t" style="left:738.20px;top:237.2px;font-size:13px;color:#333;transform:scaleX(0.8824);">Včera</div>
<div class="t" style="left:737.24px;top:261.2px;font-size:13px;color:#333;transform:scaleX(0.9552);">Dnes</div>
<div class="t" style="left:738.20px;top:285.2px;font-size:13px;color:#333;transform:scaleX(0.9542);">Vlastní období</div>
<div class="t" style="left:850.20px;top:136.7px;font-size:13px;color:#333;transform:scaleX(0.9556);">důležité</div>
<div class="t" style="left:849.22px;top:160.7px;font-size:13px;color:#333;transform:scaleX(0.9844);">S přílohami</div>
<div class="t" style="left:850.20px;top:184.7px;font-size:13px;color:#333;transform:scaleX(0.9464);">Od odesílatele</div>
<div class="t" style="left:849.23px;top:208.7px;font-size:13px;color:#333;transform:scaleX(0.9722);">Na e-mailovou adresu</div>
<div class="t" style="left:849.27px;top:232.7px;font-size:13px;color:#333;transform:scaleX(0.9254);">Se značkou</div>
<div class="t" style="left:849.24px;top:256.7px;font-size:13px;color:#333;transform:scaleX(0.9582);">S kalendářem</div>
</body></html>
